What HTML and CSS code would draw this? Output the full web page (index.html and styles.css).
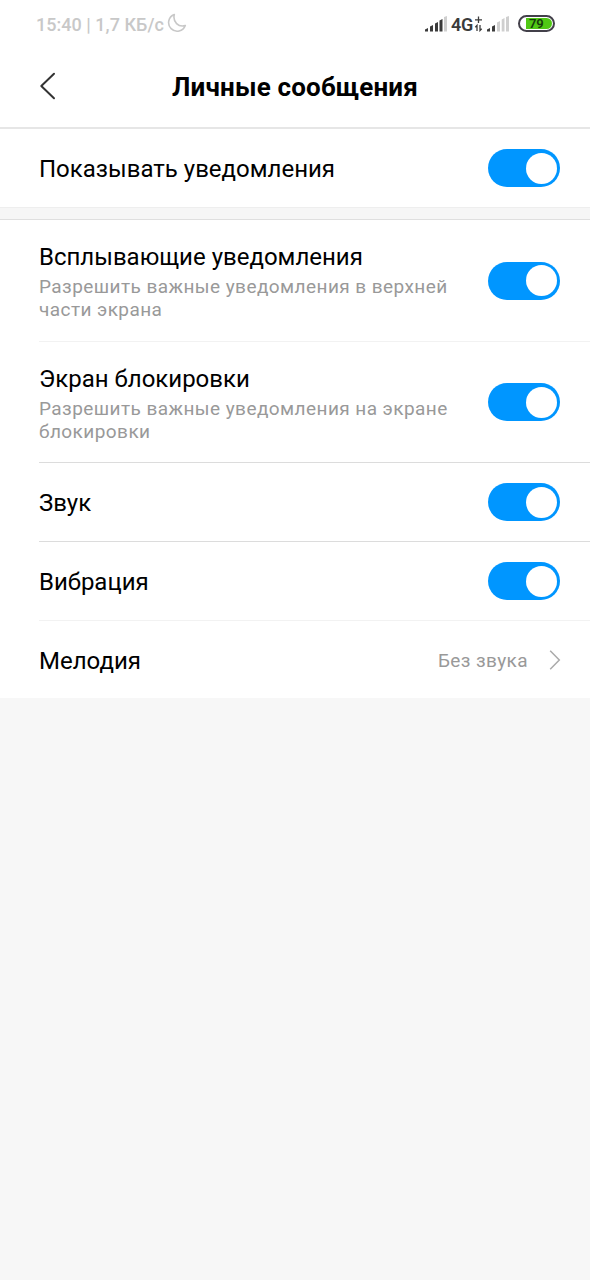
FILE: index.html
```html
<!DOCTYPE html>
<html lang="ru">
<head>
<meta charset="utf-8">
<title>Личные сообщения</title>
<link rel="stylesheet" href="styles.css">
</head>
<body>
<div class="status">
  <span class="clock">15:40 | 1,7 КБ/с</span>
  <svg class="moon" width="20" height="20" viewBox="0 0 20 20"><path d="M7.300 1.500A8.600 8.600 0 1 0 18.300 12.500C11.500 14.500 5.500 9 7.300 1.500Z"/></svg>
  <svg class="signal" width="22" height="16" viewBox="0 0 22 16"><path d="M0 15.500V13.500L3 12V15.500ZM5 15.500V10.500L8 9V15.500ZM10 15.500V7.500L13 6V15.500ZM14.500 15.500V4.500L17.500 3V15.500Z"/><path class="off" d="M19 15.500V1L22 0V15.500Z"/></svg>
  <span class="network">4G</span>
  <svg class="data" width="9" height="16" viewBox="0 0 9 16"><path d="M4.500 .5V7M1 3.800H8M3 15V9.500L1.300 11.300M6 9V14.500L7.700 12.700"/></svg>
  <svg class="signal second" width="22" height="16" viewBox="0 0 22 16"><path d="M0 15.500V13.500L3 12V15.500ZM5 15.500V10.500L8 9V15.500Z"/><path class="off" d="M10 15.500V6.500L13 5V15.500ZM14.700 15.500V3.500L17.500 2V15.500ZM19 15.500V1L22 0V15.500Z"/></svg>
  <div class="battery"><span class="level">79</span></div>
</div>
<header class="header">
  <svg class="back" width="18" height="30" viewBox="0 0 18 30"><path d="M15 2.800L2.300 15L15 27.200"/></svg>
  <h1 class="title">Личные сообщения</h1>
</header>
<section class="group">
  <div class="row"><span class="label">Показывать уведомления</span><i class="toggle"></i></div>
</section>
<div class="gap"></div>
<section class="group">
  <div class="row tall light"><div class="text"><div class="label">Всплывающие уведомления</div><div class="note">Разрешить важные уведомления в верхней<br>части экрана</div></div><i class="toggle"></i></div>
  <div class="row tall"><div class="text"><div class="label">Экран блокировки</div><div class="note">Разрешить важные уведомления на экране<br>блокировки</div></div><i class="toggle"></i></div>
  <div class="row"><span class="label">Звук</span><i class="toggle"></i></div>
  <div class="row light"><span class="label">Вибрация</span><i class="toggle"></i></div>
  <div class="row last"><span class="label">Мелодия</span><span class="value">Без звука</span><svg class="next" width="12" height="22" viewBox="0 0 12 22"><path d="M1.200 1.800L10.300 11L1.200 20.200"/></svg></div>
</section>
</body>
</html>
```
FILE: styles.css
```css
* { box-sizing: border-box; }
body {
  margin: 0;
  min-height: 1280px;
  background: #f7f7f7;
  color: #000;
  font-family: Roboto, sans-serif;
}
svg { flex: none; fill: none; }
.status {
  display: flex;
  height: 48px;
  padding: 0 35px 0 36px;
  align-items: center;
  background: #fff;
}
.clock {
  width: 131px;
  white-space: nowrap;
  color: #c8c8c8;
  font-size: 18px;
  font-weight: 500;
  letter-spacing: .03px;
}
.moon { margin-top: -2px; stroke: #c8c8c8; stroke-width: 1.600; stroke-linejoin: round; }
.signal { margin-left: auto; fill: #3b3b3b; }
.signal .off { fill: #cfcfcf; }
.network {
  width: 23px;
  margin-left: 4px;
  color: #3b3b3b;
  font-size: 18px;
  font-weight: 600;
  letter-spacing: -.3px;
}
.data { stroke: #3b3b3b; stroke-width: 1.300; }
.signal.second { margin-left: 4px; }
.battery {
  width: 37px;
  height: 17px;
  margin: -1px 0 0 9px;
  padding: 1px 1px 1px 6px;
  border: 2px solid #43404a;
  border-radius: 9px;
}
.level {
  display: block;
  height: 11px;
  padding-left: 3px;
  border-radius: 0 6px 6px 0;
  background: #50c814;
  color: #173c0c;
  font-size: 13px;
  font-weight: 600;
  line-height: 12px;
  letter-spacing: -.3px;
}
.header {
  display: grid;
  height: 81px;
  padding: 0 39px;
  grid-template-columns: 18px 1fr 18px;
  align-items: center;
  border-bottom: 2px solid #e6e6e6;
  background: #fff;
}
.back { margin-top: -3px; stroke: #333; stroke-width: 2; stroke-linecap: round; stroke-linejoin: round; }
.title {
  margin: -1px 0 0;
  font-size: 26px;
  font-weight: 700;
  line-height: 32px;
  letter-spacing: .18px;
  text-align: center;
  white-space: nowrap;
}
.group { padding-left: 39px; background: #fff; }
.row {
  display: flex;
  height: 79px;
  padding-right: 30px;
  align-items: center;
  border-bottom: 1px solid #dcdcdc;
}
.group:first-of-type .row { height: 78px; border-bottom: 0; }
.row.tall { height: 121px; }
.row.tall.light { height: 122px; }
.row.light { border-color: #f2f2f2; }
.row.last { height: 77px; border-bottom: 0; }
.label { font-size: 24px; line-height: 30px; }
.row > .label { padding-top: 2px; }
.note { margin-top: 3px; color: #999; font-size: 19px; line-height: 23px; letter-spacing: .43px; white-space: nowrap; }
.text { padding-top: 2px; }
.toggle {
  display: flex;
  width: 72px;
  height: 38px;
  margin-left: auto;
  padding: 3.500px;
  flex: none;
  justify-content: flex-end;
  border-radius: 19px;
  background: #0096ff;
}
.toggle::after { content: ""; width: 31px; height: 31px; border-radius: 50%; background: #fff; }
.gap { height: 13px; border-top: 1px solid #eee; border-bottom: 1px solid #dfdfdf; background: #f6f6f6; }
.value { margin-left: auto; padding-top: 1px; color: #999; font-size: 19px; letter-spacing: .4px; }
.next { margin: 0 -1px 0 21px; stroke: #aaa; stroke-width: 1.500; }
```
